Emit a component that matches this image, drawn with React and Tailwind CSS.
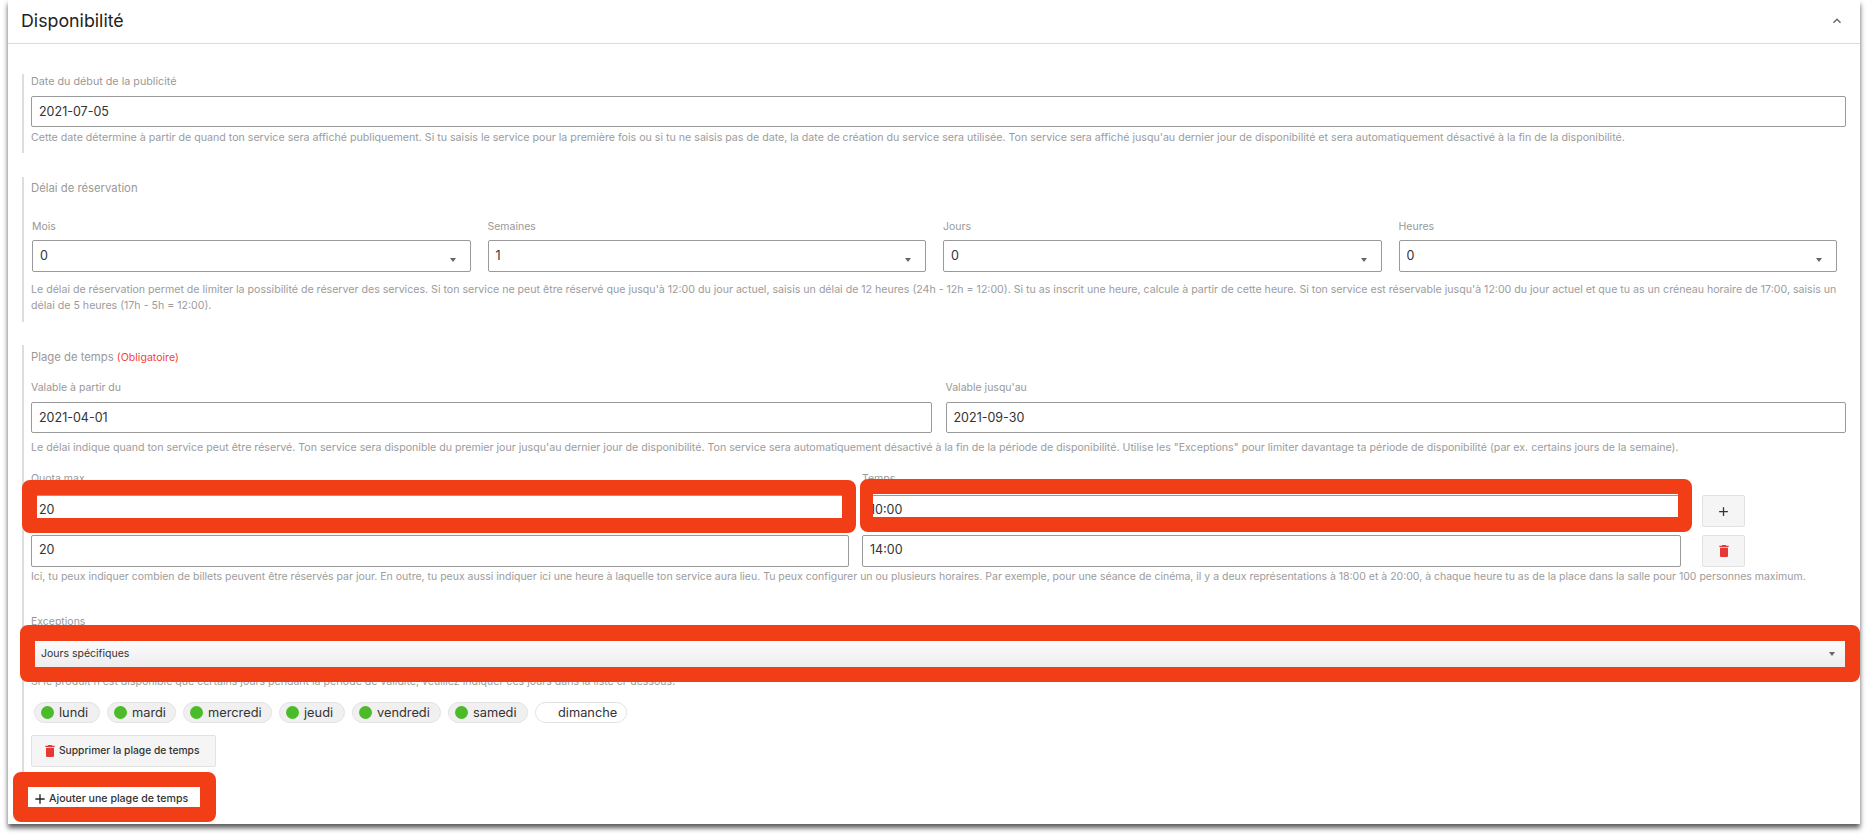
const DAYS = [
  { label: 'lundi', on: true, w: 'w-[66px]' },
  { label: 'mardi', on: true, w: 'w-[69px]' },
  { label: 'mercredi', on: true, w: 'w-[89px]' },
  { label: 'jeudi', on: true, w: 'w-[66px]' },
  { label: 'vendredi', on: true, w: 'w-[89px]' },
  { label: 'samedi', on: true, w: 'w-[80px]' },
  { label: 'dimanche', on: false, w: 'w-[92px]' },
];

function TrashIcon({ className }) {
  return (
    <svg viewBox="0 0 24 24" className={className} fill="currentColor">
      <path d="M6 19c0 1.1.9 2 2 2h8c1.1 0 2-.9 2-2V7H6v12zM19 4h-3.5l-1-1h-5l-1 1H5v2h14V4z" />
    </svg>
  );
}

function PlusIcon({ className }) {
  return (
    <svg viewBox="0 0 24 24" className={className} fill="currentColor">
      <path d="M19 13h-6v6h-2v-6H5v-2h6V5h2v6h6v2z" />
    </svg>
  );
}

function Label({ children, className = 'text-[10.5px]' }) {
  return <div className={`leading-[14px] text-[#999] ${className}`}>{children}</div>;
}

function Help({ children, className = '' }) {
  return <p className={`leading-4 text-[#9c9c9c] ${className}`}>{children}</p>;
}

function Field({ value, className = 'h-[32px]' }) {
  return (
    <div className={`flex items-center px-[7px] bg-white border border-[#9a9a9a] rounded-[2px] text-[12.5px] text-[#333] ${className}`}>
      {value}
    </div>
  );
}

function SelectField({ label, value }) {
  return (
    <div>
      <Label className="text-[10.5px] mb-[6px]">{label}</Label>
      <div className="h-[32px] flex items-center justify-between pl-[7px] pr-[14px] bg-white border border-[#9a9a9a] rounded-[2px] text-[12.5px] text-[#333]">
        <span>{value}</span>
        <span className="mt-[7px] w-0 h-0 border-x-[3px] border-x-transparent border-t-[4px] border-t-[#666]" />
      </div>
    </div>
  );
}

function IconButton({ children }) {
  return (
    <button className="w-[43px] h-[32px] flex items-center justify-center bg-[#f5f5f5] border border-[#e2e2e2] rounded-[2px]">
      {children}
    </button>
  );
}

function Annotation({ className }) {
  return <div className={`absolute border-solid border-[#f23e17] rounded-[8px] ${className}`} />;
}

export default function App() {
  return (
    <div className="relative w-[1872px] h-[840px] bg-white overflow-hidden font-['Inter','Noto_Sans',sans-serif]">

      {/* Panel */}
      <div className="ml-2 w-[1852px] bg-white shadow-[0_4px_5px_rgba(0,0,0,0.65)]">

        {/* Header */}
        <div className="h-[44px] flex items-center justify-between pl-[13px] pr-[15px] border-b border-[#dcdcdc]">
          <h2 className="text-[17.8px] text-[#222]">Disponibilité</h2>
          <svg viewBox="0 0 24 24" className="w-[16px] h-[16px] mb-px text-[#666]" fill="currentColor">
            <path d="M7.41 15.41 12 10.83l4.59 4.58L18 14l-6-6-6 6z" />
          </svg>
        </div>

        <div className="pt-[30px] pl-[14px] pr-[14px] pb-[9px]">

          {/* Date du début */}
          <section className="border-l-2 border-[#ddd] pl-[7px] pb-[7px]">
            <Label className="text-[10.75px] pt-px mb-[7px]">Date du début de la publicité</Label>
            <Field value="2021-07-05" className="h-[31px] pt-[2px]" />
            <Help className="mt-[3px] text-[10.65px]">
              Cette date détermine à partir de quand ton service sera affiché publiquement. Si tu saisis le service pour la première fois ou si tu ne saisis pas de date, la date de création du service sera utilisée. Ton service sera affiché jusqu'au dernier jour de disponibilité et sera automatiquement désactivé à la fin de la disponibilité.
            </Help>
          </section>

          {/* Délai de réservation */}
          <section className="mt-6 border-l-2 border-[#ddd] pl-[7px] pt-[3px] pb-2">
            <div className="text-[11.3px] leading-4 text-[#999]">Délai de réservation</div>
            <div className="mt-6 ml-px mr-[9px] grid grid-cols-4 gap-x-[17px]">
              <SelectField label="Mois" value="0" />
              <SelectField label="Semaines" value="1" />
              <SelectField label="Jours" value="0" />
              <SelectField label="Heures" value="0" />
            </div>
            <Help className="mt-[10px] text-[10.62px]">
              Le délai de réservation permet de limiter la possibilité de réserver des services. Si ton service ne peut être réservé que jusqu'à 12:00 du jour actuel, saisis un délai de 12 heures (24h - 12h = 12:00). Si tu as inscrit une heure, calcule à partir de cette heure. Si ton service est réservable jusqu'à 12:00 du jour actuel et que tu as un créneau horaire de 17:00, saisis un délai de 5 heures (17h - 5h = 12:00).
            </Help>
          </section>

          {/* Plage de temps */}
          <section className="mt-[23px] border-l-2 border-[#ddd] pl-[7px] pt-1 pb-[5px]">
            <div className="text-[11.3px] leading-4 text-[#999]">
              Plage de temps <span className="text-[10.6px] text-[#f44336]">(Obligatoire)</span>
            </div>

            <div className="mt-[15px] grid grid-cols-2 gap-x-[14px]">
              <div>
                <Label className="text-[10.5px] mb-[7px]">Valable à partir du</Label>
                <Field value="2021-04-01" className="h-[31px] pt-px" />
              </div>
              <div>
                <Label className="text-[10.5px] mb-[7px]">Valable jusqu'au</Label>
                <Field value="2021-09-30" className="h-[31px] pt-px" />
              </div>
            </div>
            <Help className="mt-[7px] text-[10.63px]">
              Le délai indique quand ton service peut être réservé. Ton service sera disponible du premier jour jusqu'au dernier jour de disponibilité. Ton service sera automatiquement désactivé à la fin de la période de disponibilité. Utilise les "Exceptions" pour limiter davantage ta période de disponibilité (par ex. certains jours de la semaine).
            </Help>

            <div className="mt-4 flex">
              <Label className="text-[10.5px] w-[831px]">Quota max.</Label>
              <Label>Temps</Label>
            </div>
            <div className="mt-[9px] flex items-center">
              <Field value="20" className="w-[818px] h-[32px] pb-px" />
              <Field value="10:00" className="w-[819px] h-[32px] pb-px ml-[13px]" />
              <div className="ml-[21px]">
                <IconButton><PlusIcon className="w-[15px] h-[15px] text-[#333]" /></IconButton>
              </div>
            </div>
            <div className="mt-2 flex items-center">
              <Field value="20" className="w-[818px] h-[32px] pb-px" />
              <Field value="14:00" className="w-[819px] h-[32px] pb-px ml-[13px]" />
              <div className="ml-[21px]">
                <IconButton><TrashIcon className="w-[16px] h-[16px] text-[#e53935]" /></IconButton>
              </div>
            </div>
            <Help className="mt-[2px] text-[10.5px]">
              Ici, tu peux indiquer combien de billets peuvent être réservés par jour. En outre, tu peux aussi indiquer ici une heure à laquelle ton service aura lieu. Tu peux configurer un ou plusieurs horaires. Par exemple, pour une séance de cinéma, il y a deux représentations à 18:00 et à 20:00, à chaque heure tu as de la place dans la salle pour 100 personnes maximum.
            </Help>

            <Label className="text-[10.5px] mt-[30px]">Exceptions</Label>
            <div className="mt-[13px] h-[27px] pb-1 flex items-center justify-between pl-[10px] pr-[11px] bg-gradient-to-b from-[#fbfbfb] to-[#ececec] text-[10.5px] text-[#333]">
              <span>Jours spécifiques</span>
              <span className="w-0 h-0 border-x-[3px] border-x-transparent border-t-[4px] border-t-[#666]" />
            </div>
            <Help className="mt-[5px] text-[10.58px]">
              Si le produit n'est disponible que certains jours pendant la période de validité, veuillez indiquer ces jours dans la liste ci-dessous.
            </Help>

            {/* Jours */}
            <div className="mt-3 ml-[3px] flex gap-[7px]">
              {DAYS.map(({ label, on, w }) => (
                <div
                  key={label}
                  className={`${w} h-[21px] flex items-center pl-[6px] rounded-full border border-[#e2e2e2] text-[12.8px] text-[#333] ${on ? 'gap-[5px] bg-[#f0f0f0]' : 'gap-[3px] bg-white'}`}
                >
                  <span className={`w-[13px] h-[13px] rounded-full shrink-0 ${on ? 'bg-[#4cbb2a]' : 'bg-white'}`} />
                  <span>{label}</span>
                </div>
              ))}
            </div>

            <button className="mt-3 w-[185px] h-[32px] flex items-center pl-[10px] gap-px bg-[#f5f5f5] border border-[#e2e2e2] rounded-[2px] text-[10.25px] font-medium text-[#333]">
              <TrashIcon className="w-[16px] h-[16px] text-[#e53935]" />
              Supprimer la plage de temps
            </button>
          </section>

          <button className="mt-[11px] ml-[6px] w-[178px] h-[32px] flex items-center pl-[4px] gap-px bg-white text-[10.6px] font-medium text-[#333]">
            <PlusIcon className="w-[16px] h-[16px] text-[#222]" />
            Ajouter une plage de temps
          </button>
        </div>
      </div>

      {/* Red annotation frames drawn over the form */}
      <Annotation className="left-[22px] top-[480px] w-[834px] h-[53px] border-y-[15px] border-l-[15px] border-r-[14px]" />
      <Annotation className="left-[860px] top-[479px] w-[832px] h-[53px] border-y-[15px] border-l-[13px] border-r-[14px]" />
      <Annotation className="left-[20px] top-[625px] w-[1840px] h-[57px] border-t-[16px] border-b-[15px] border-x-[15px]" />
      <Annotation className="left-[13px] top-[772px] w-[203px] h-[50px] border-y-[15px] border-l-[15px] border-r-[16px]" />
    </div>
  );
}
